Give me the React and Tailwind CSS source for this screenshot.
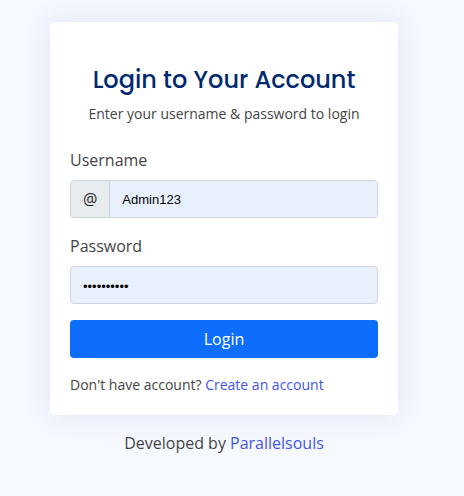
export default function App() {
  return (
    <main className="flex min-h-screen flex-col items-center bg-[#f6f9ff] pt-[22px] pr-[66px] pl-[50px] font-['Open_Sans',sans-serif] text-base leading-6 text-[#444444]">
      <section className="w-full rounded-[5px] bg-white px-5 pb-5 shadow-[0_0_30px_rgba(1,41,112,0.1)]">
        <header className="pt-10 pb-2 text-center">
          <h1 className="pb-1.5 font-['Poppins','Inter',sans-serif] text-2xl leading-9 font-medium text-[#012970]">
            Login to Your Account
          </h1>
          <p className="text-sm leading-5">Enter your username &amp; password to login</p>
        </header>
        <form className="flex flex-col gap-4 pt-4" onSubmit={(e) => e.preventDefault()}>
          <div>
            <label htmlFor="username" className="mb-2 block">Username</label>
            <div className="flex h-[38px] overflow-hidden rounded border border-[#ced4da]">
              <span className="flex items-center border-r border-[#ced4da] bg-[#e9ecef] px-3 text-[#212529]">@</span>
              <input id="username" type="text" defaultValue="Admin123" className="min-w-0 flex-1 bg-[#e8f0fe] px-3 pt-0.5 font-['Liberation_Sans',sans-serif] text-[13px] text-black outline-none" />
            </div>
          </div>
          <div>
            <label htmlFor="password" className="mb-2 block">Password</label>
            <input id="password" type="password" defaultValue="password12" className="block h-[38px] w-full rounded border border-[#ced4da] bg-[#e8f0fe] px-3 pt-0.5 font-['Liberation_Sans',sans-serif] text-[13px] text-black outline-none" />
          </div>
          <button type="submit" className="h-[38px] rounded bg-[#0d6efd] text-white">Login</button>
          <p className="text-sm leading-[21px]">
            Don't have account? <a href="#register" className="text-[#4154f1]">Create an account</a>
          </p>
        </form>
      </section>
      <p className="mt-4">
        Developed by <a href="#parallelsouls" className="text-[#4154f1]">Parallelsouls</a>
      </p>
    </main>
  );
}
